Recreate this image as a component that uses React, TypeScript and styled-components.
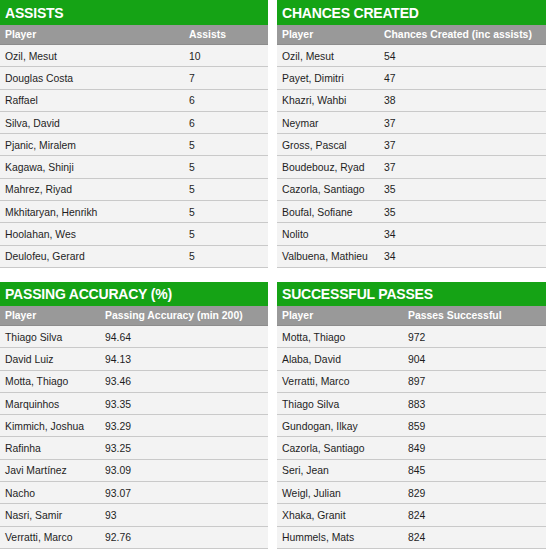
import React from "react";
import styled, { createGlobalStyle } from "styled-components";

const Global = createGlobalStyle`
  html, body { margin: 0; padding: 0; background: #fff; }
  body { font-family: "Liberation Sans", Arial, sans-serif; }
`;

const Page = styled.div`
  display: grid;
  grid-template-columns: 268px 269px;
  column-gap: 9px;
  row-gap: 14px;
  width: 546px;
`;

const Panel = styled.section`
  display: flex;
  flex-direction: column;
`;

const Title = styled.div<{ $h: number }>`
  height: ${(p) => p.$h}px;
  background: #15a315;
  color: #fff;
  font-weight: bold;
  font-size: 14px;
  display: flex;
  align-items: center;
  padding-left: 5px;
  letter-spacing: -0.2px;
`;

const Row = styled.div<{ $col: number }>`
  display: grid;
  grid-template-columns: ${(p) => p.$col}px 1fr;
  align-items: center;
  font-size: 10.4px;
  box-sizing: border-box;
`;

const HeadRow = styled(Row)`
  height: 20px;
  background: #999999;
  color: #fff;
  font-weight: bold;
  border-bottom: 1px solid #8c8c8c;
`;

const BodyRow = styled(Row)`
  height: 22.3px;
  padding-top: 1px;
  background: #f3f3f3;
  color: #1e1e1e;
  border-bottom: 1px solid #c9c9c9;
`;

const Cell = styled.span`
  padding-left: 5px;
  white-space: nowrap;
`;

type T = { title: string; col: number; h: number; head: [string, string]; rows: [string, string][] };

const tables: T[] = [
  {
    title: "ASSISTS",
    col: 184,
    h: 25,
    head: ["Player", "Assists"],
    rows: [
      ["Ozil, Mesut", "10"],
      ["Douglas Costa", "7"],
      ["Raffael", "6"],
      ["Silva, David", "6"],
      ["Pjanic, Miralem", "5"],
      ["Kagawa, Shinji", "5"],
      ["Mahrez, Riyad", "5"],
      ["Mkhitaryan, Henrikh", "5"],
      ["Hoolahan, Wes", "5"],
      ["Deulofeu, Gerard", "5"],
    ],
  },
  {
    title: "CHANCES CREATED",
    col: 102,
    h: 25,
    head: ["Player", "Chances Created (inc assists)"],
    rows: [
      ["Ozil, Mesut", "54"],
      ["Payet, Dimitri", "47"],
      ["Khazri, Wahbi", "38"],
      ["Neymar", "37"],
      ["Gross, Pascal", "37"],
      ["Boudebouz, Ryad", "37"],
      ["Cazorla, Santiago", "35"],
      ["Boufal, Sofiane", "35"],
      ["Nolito", "34"],
      ["Valbuena, Mathieu", "34"],
    ],
  },
  {
    title: "PASSING ACCURACY (%)",
    col: 100,
    h: 24,
    head: ["Player", "Passing Accuracy (min 200)"],
    rows: [
      ["Thiago Silva", "94.64"],
      ["David Luiz", "94.13"],
      ["Motta, Thiago", "93.46"],
      ["Marquinhos", "93.35"],
      ["Kimmich, Joshua", "93.29"],
      ["Rafinha", "93.25"],
      ["Javi Martínez", "93.09"],
      ["Nacho", "93.07"],
      ["Nasri, Samir", "93"],
      ["Verratti, Marco", "92.76"],
    ],
  },
  {
    title: "SUCCESSFUL PASSES",
    col: 126,
    h: 24,
    head: ["Player", "Passes Successful"],
    rows: [
      ["Motta, Thiago", "972"],
      ["Alaba, David", "904"],
      ["Verratti, Marco", "897"],
      ["Thiago Silva", "883"],
      ["Gundogan, Ilkay", "859"],
      ["Cazorla, Santiago", "849"],
      ["Seri, Jean", "845"],
      ["Weigl, Julian", "829"],
      ["Xhaka, Granit", "824"],
      ["Hummels, Mats", "824"],
    ],
  },
];

export default function App() {
  return (
    <>
      <Global />
      <Page>
        {tables.map((t) => (
          <Panel key={t.title}>
            <Title $h={t.h}>{t.title}</Title>
            <HeadRow $col={t.col}>
              <Cell>{t.head[0]}</Cell>
              <Cell>{t.head[1]}</Cell>
            </HeadRow>
            {t.rows.map((r, i) => (
              <BodyRow key={i} $col={t.col}>
                <Cell>{r[0]}</Cell>
                <Cell>{r[1]}</Cell>
              </BodyRow>
            ))}
          </Panel>
        ))}
      </Page>
    </>
  );
}
